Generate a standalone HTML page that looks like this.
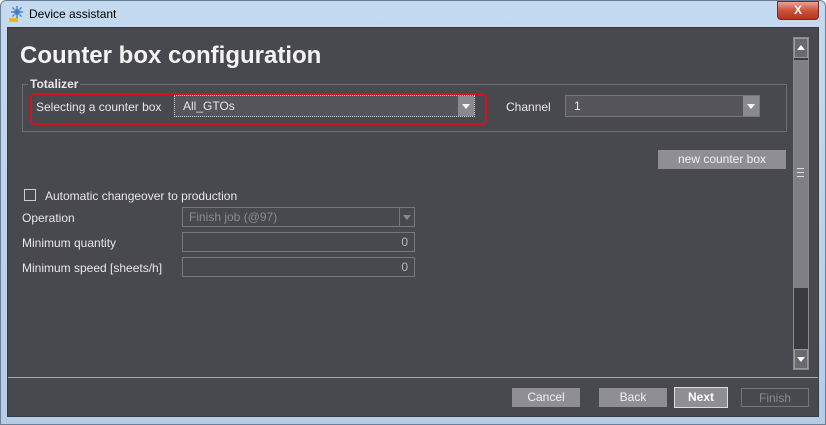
<!DOCTYPE html>
<html><head><style>
*{margin:0;padding:0;box-sizing:border-box}
body{width:826px;height:425px;overflow:hidden;background:#fff;font-family:"Liberation Sans",sans-serif;font-size:12px;color:#e8e8e8;position:relative}
.frame{position:absolute;left:0;top:0;width:826px;height:425px;background:linear-gradient(#c4daf0,#b4cce6);border:1px solid #6c7f96;border-radius:6px 6px 0 0}
.title{position:absolute;left:29px;top:7px;color:#000;font-size:12px}
.close{position:absolute;left:777px;top:1px;width:42px;height:19px;background:linear-gradient(#e8a394,#c9533e 50%,#b8321e);border:1px solid #7a2a20;border-radius:0 0 4px 4px;color:#fff;font-weight:bold;text-align:center;font-size:12px;line-height:17px}
.content{position:absolute;left:7px;top:27px;width:812px;height:390px;background:#48484f;border:1px solid #3a3a40}
.abs{position:absolute}
h1{position:absolute;left:20px;top:42px;font-size:24px;font-weight:bold;color:#f4f4f4}
.box{border:1px solid #6e6e74}
.dd{position:absolute;background:#55555b;border:1px solid #77777c;height:22px;line-height:21px;padding-left:8px}
.arr{position:absolute;right:0;top:0;width:16px;height:20px;background:#8a8a8e}
.arr:after{content:"";position:absolute;left:4px;top:8px;border-left:4px solid transparent;border-right:4px solid transparent;border-top:5px solid #fff}
.btn{position:absolute;height:19px;background:#8f8f93;color:#f0f0f0;text-align:center;line-height:18px}
.inp{position:absolute;left:182px;width:233px;height:20px;border:1px solid #77777c;text-align:right;padding-right:6px;line-height:18px;color:#bbb}
</style></head><body>
<div class="frame"></div>
<svg class="abs" style="left:8px;top:5px" width="18" height="18" viewBox="0 0 18 18"><circle cx="9" cy="7" r="3" fill="#3a7fd0"/><path d="M9 1v3M9 10v3M3 7h3M12 7h3M4.5 2.5l2 2M13.5 2.5l-2 2M4.5 11.5l2-2M13.5 11.5l-2-2" stroke="#3a6fb0" stroke-width="1.2"/><rect x="1" y="13" width="9" height="4" fill="#e8b820"/></svg>
<div class="title">Device assistant</div>
<div class="close">X</div>
<div class="content"></div>
<h1>Counter box configuration</h1>
<div class="abs box" style="left:22px;top:84px;width:765px;height:48px"></div>
<div class="abs" style="left:28px;top:77px;background:#48484f;padding:0 2px;font-weight:bold">Totalizer</div>
<div class="abs" style="left:30px;top:93px;width:457px;height:32px;border:2px solid #d8101c;border-radius:5px"></div>
<div class="abs" style="left:36px;top:100px">Selecting a counter box</div>
<div class="dd" style="left:174px;top:95px;width:301px;border:1px dotted #ccc">All_GTOs<div class="arr"></div></div>
<div class="abs" style="left:506px;top:100px">Channel</div>
<div class="dd" style="left:565px;top:95px;width:195px">1<div class="arr"></div></div>
<div class="btn" style="left:658px;top:150px;width:128px">new counter box</div>
<div class="abs" style="left:24px;top:189px;width:12px;height:12px;border:1px solid #ccc"></div>
<div class="abs" style="left:45px;top:189px">Automatic changeover to production</div>
<div class="abs" style="left:22px;top:211px">Operation</div>
<div class="abs" style="left:22px;top:236px">Minimum quantity</div>
<div class="abs" style="left:22px;top:261px">Minimum speed [sheets/h]</div>
<div class="inp" style="top:207px;text-align:left;padding-left:6px;color:#8a8a8e">Finish job (@97)<div style="position:absolute;right:0;top:0;width:15px;height:18px;border-left:1px solid #77777c"><div style="position:absolute;left:3px;top:7px;border-left:4px solid transparent;border-right:4px solid transparent;border-top:5px solid #888"></div></div></div>
<div class="inp" style="top:232px">0</div>
<div class="inp" style="top:257px">0</div>
<div class="abs" style="left:793px;top:37px;width:16px;height:333px;background:#3a3a40;border:1px solid #8a8a8e"></div>
<div class="abs" style="left:794px;top:38px;width:14px;height:20px;background:#6a6a6e;border:1px solid #999"><div style="position:absolute;left:2px;top:6px;border-left:4px solid transparent;border-right:4px solid transparent;border-bottom:5px solid #fff"></div></div>
<div class="abs" style="left:794px;top:60px;width:14px;height:228px;background:#808084"></div>
<div class="abs" style="left:797px;top:168px;width:7px;height:9px;border-top:1px solid #ddd;border-bottom:1px solid #ddd"><div style="margin-top:3px;border-top:1px solid #ddd"></div></div>
<div class="abs" style="left:794px;top:349px;width:14px;height:20px;background:#6a6a6e;border:1px solid #999"><div style="position:absolute;left:2px;top:7px;border-left:4px solid transparent;border-right:4px solid transparent;border-top:5px solid #fff"></div></div>
<div class="abs" style="left:8px;top:377px;width:810px;height:1px;background:#a8a8ae"></div>
<div class="btn" style="left:512px;top:388px;width:68px">Cancel</div>
<div class="btn" style="left:599px;top:388px;width:68px">Back</div>
<div class="btn" style="left:674px;top:387px;width:54px;height:21px;border:1px solid #ddd;font-weight:bold;color:#fff">Next</div>
<div class="btn" style="left:741px;top:388px;width:68px;background:none;border:1px solid #76767a;color:#8a8a8e">Finish</div>
</body></html>
